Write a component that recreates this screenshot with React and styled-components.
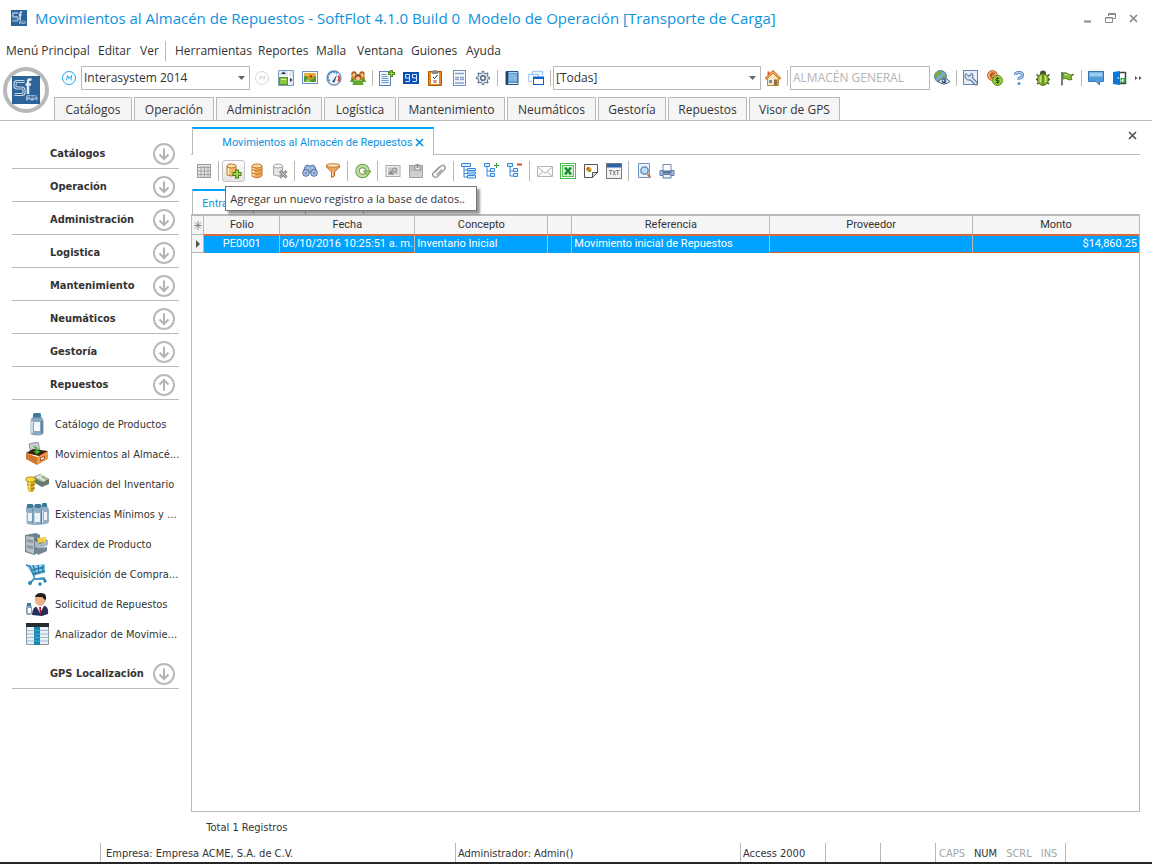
import React from 'react';
import styled, { createGlobalStyle, css } from 'styled-components';

const ui = '"Open Sans", "Noto Sans", sans-serif';
const tahoma = '"DejaVu Sans Condensed", "DejaVu Sans", sans-serif';
const grid = 'Roboto, "Liberation Sans", sans-serif';
const LINE = '#b9b9b9';
const BLUE = '#00a2ff';
const LINK = '#0d93de';

const Global = createGlobalStyle`
  *, *::before, *::after { box-sizing: border-box; }
  body { margin: 0; background: #fff; color: #333; font-family: ${ui}; font-size: 12px; }
  button, input, select { font: inherit; color: inherit; margin: 0; }
  svg { display: block; flex: none; }
`;

const Window = styled.div`
  min-height: 100vh;
  display: flex;
  flex-direction: column;
  background: #fff;
`;

const TitleBar = styled.header`
  display: flex;
  align-items: center;
  height: 36px;
  padding: 0 7px 0 11px;
`;

const Title = styled.h1`
  flex: 1;
  margin: 0 0 0 8px;
  font-size: 15px;
  line-height: 20px;
  font-weight: 400;
  color: ${LINK};
  white-space: pre;
  overflow: hidden;
`;

const PlainButton = styled.button`
  display: flex;
  align-items: center;
  justify-content: center;
  padding: 0;
  border: 0;
  background: none;
`;

const WindowButton = styled(PlainButton)`
  width: 23px;
  height: 20px;
`;

const MenuBar = styled.nav`
  display: flex;
  align-items: center;
  height: 30px;
  padding-left: 6px;
`;

const MenuItem = styled(PlainButton)`
  flex: 0 0 ${(p) => p.$w}px;
  justify-content: flex-start;
  line-height: 20px;
  white-space: nowrap;
  ${(p) => p.$split && css`
    padding-left: 9px;
    border-left: 1px solid ${LINE};
  `}
`;

const Ribbon = styled.div`
  display: flex;
  border-bottom: 1px solid ${LINE};
`;

const LogoCell = styled.div`
  flex: 0 0 54px;
  padding: 1px 0 0 3px;
`;

const RibbonRows = styled.div`
  flex: 1;
  min-width: 0;
`;

const MainToolbar = styled.div`
  display: flex;
  align-items: center;
  height: 24px;
  padding-left: 3px;
`;

const ToolButton = styled(PlainButton)`
  flex: 0 0 24px;
  height: 24px;
`;

const Divider = styled.span`
  flex: 0 0 1px;
  height: ${(p) => p.$h || 16}px;
  margin: 0 ${(p) => p.$m || 2}px;
  background: ${LINE};
`;

const Combo = styled.div`
  position: relative;
  flex: 0 0 ${(p) => p.$w}px;
  height: 24px;

  select {
    width: 100%;
    height: 100%;
    padding: 0 20px 2px 2px;
    border: 1px solid ${LINE};
    border-radius: 0;
    background: #fff;
    appearance: none;
  }

  svg {
    position: absolute;
    right: 5px;
    top: 10px;
    pointer-events: none;
  }
`;

const TextBox = styled.input`
  flex: 0 0 140px;
  width: 140px;
  height: 24px;
  padding: 0 2px 2px;
  border: 1px solid ${LINE};
  background: #fff;
  &:disabled { color: #b4b4b4; }
`;

const RibbonTabs = styled.div`
  display: flex;
  gap: 2px;
  margin-top: 7px;
`;

const RibbonTab = styled.button`
  flex: 0 0 ${(p) => p.$w}px;
  height: 23px;
  padding: 2px 0 0;
  border: 1px solid ${LINE};
  border-bottom: 0;
  background: #f5f5f5;
  line-height: 20px;
  white-space: nowrap;
`;

const Body = styled.div`
  flex: 1;
  display: flex;
`;

const Sidebar = styled.aside`
  flex: 0 0 191px;
  padding: 15px 12px 0;
  font-family: ${tahoma};
  font-size: 11px;
`;

const GroupHeader = styled(PlainButton)`
  width: 100%;
  height: 33px;
  justify-content: space-between;
  padding: 3px 4px 0 38px;
  border-bottom: 1px solid ${LINE};
  font-weight: 700;
  white-space: nowrap;
`;

const GroupItems = styled.ul`
  margin: 9px 0 7px;
  padding: 0 0 0 13px;
  list-style: none;
`;

const GroupItem = styled.a`
  display: flex;
  align-items: center;
  gap: 6px;
  height: 30px;
  color: inherit;
  text-decoration: none;
  white-space: nowrap;
`;

const Main = styled.main`
  flex: 1;
  min-width: 0;
  display: flex;
  flex-direction: column;
  padding: 6px 12px 0 0;
`;

const DocTabs = styled.div`
  display: flex;
  align-items: flex-start;
  justify-content: space-between;
  height: 28px;
  padding-left: 1px;
  border-bottom: 1px solid ${LINE};
`;

const DocTab = styled.div`
  display: flex;
  align-items: center;
  justify-content: space-between;
  width: 242px;
  height: 28px;
  padding: 0 9px 0 29px;
  border: 1px solid ${LINE};
  border-top: 2px solid ${BLUE};
  border-bottom: 0;
  background: #fff;
  color: ${LINK};
  font-family: ${grid};
  font-size: 11px;
  white-space: nowrap;
`;

const ClosePanel = styled(PlainButton)`
  width: 15px;
  height: 16px;
`;

const RecordToolbar = styled.div`
  display: flex;
  align-items: center;
  height: 32px;
  padding-left: 1px;
`;

const RecordButton = styled(PlainButton)`
  width: 23px;
  height: 22px;
  border-radius: 3px;
  ${(p) => p.$hot && css`
    border: 1px solid #c4c4c4;
    background: linear-gradient(#fff, #e4e4e4);
  `}
`;

const TipAnchor = styled.div`
  position: relative;
`;

const Tooltip = styled.div`
  position: absolute;
  z-index: 2;
  left: 3px;
  top: 26px;
  width: 252px;
  height: 25px;
  padding-left: 4px;
  border: 1px solid #767676;
  background: #fff;
  box-shadow: 3px 3px 2px rgba(0, 0, 0, 0.4);
  font-size: 11px;
  line-height: 23px;
  white-space: nowrap;
`;

const ViewTabs = styled.div`
  display: flex;
  align-items: flex-end;
  height: 27px;
  padding: 2px 0 0 1px;
`;

const ViewTab = styled.button`
  width: ${(p) => p.$w}px;
  height: 25px;
  padding: 2px 0 0 9px;
  border: 0;
  border-left: 1px solid ${LINE};
  border-top: 2px solid ${BLUE};
  background: #fff;
  color: ${LINK};
  font-family: ${grid};
  font-size: 11px;
  text-align: left;
  overflow: hidden;
`;

const ViewMark = styled.span`
  width: ${(p) => p.$w}px;
  height: 4px;
  border-left: 1px solid ${LINE};
`;

const GridPanel = styled.div`
  flex: 1;
  border: 1px solid ${LINE};
  border-top-width: 2px;
`;

const Table = styled.table`
  width: 100%;
  border-collapse: separate;
  border-spacing: 0;
  table-layout: fixed;
  font-family: ${grid};
  font-size: 11px;
  line-height: 14px;
`;

const HeadCell = styled.th`
  width: ${(p) => (p.$w ? `${p.$w}px` : 'auto')};
  height: 18px;
  padding: 0;
  border-right: 1px solid ${LINE};
  background: #f5f5f5;
  font-weight: 400;
  &:last-child { border-right: 0; }
`;

const Cell = styled.td`
  height: 19px;
  padding: 0 2px;
  border-top: 2px solid #d8693c;
  border-bottom: 1px dotted #e8641e;
  border-right: 1px solid ${LINE};
  background: ${BLUE};
  color: #fff;
  text-align: ${(p) => p.$align || 'left'};
  white-space: nowrap;
  overflow: hidden;
  &:last-child { border-right: 0; }
`;

const MarkerCell = styled.td`
  padding: 0 0 0 3px;
  border: solid ${LINE};
  border-width: 1px 1px 1px 0;
  background: #f5f5f5;
`;

const Total = styled.p`
  margin: 0;
  padding-left: 15px;
  font-family: ${tahoma};
  font-size: 11px;
  line-height: 31px;
`;

const StatusBar = styled.footer`
  display: flex;
  height: 21px;
  padding-left: 100px;
  border-bottom: 2px solid #262626;
  font-family: ${tahoma};
  font-size: 11px;
  line-height: 21px;
`;

const StatusCell = styled.div`
  flex: ${(p) => (p.$grow ? '1 0' : '0 0')} ${(p) => p.$w}px;
  padding-left: ${(p) => p.$pad || 2}px;
  border-left: 1px solid ${LINE};
  white-space: nowrap;
`;

const KeyStates = styled(StatusCell)`
  display: flex;
  gap: 9px;
  color: #a5a5a5;
  strong { font-weight: 400; color: #333; }
`;

const ART = {
  logo: (
    <>
      <rect width="28" height="28" fill="#2c6499" />
      <path d="M12.500 5.500H5Q3 5.500 3 8v1.500Q3 12 5 12h5q2 0 2 2v2.500q0 2-2 2H2.500" fill="none" stroke="#c9d9e8" strokeWidth="3.200" />
      <path d="M12.500 5.500H5Q3 5.500 3 8v1.500Q3 12 5 12h5q2 0 2 2v2.500q0 2-2 2H2.500" fill="none" stroke="#2c6499" strokeWidth="1" />
      <path d="M19.500 3.500h-1.500q-2 0-2 2V18M13.500 8.500h5.500" fill="none" stroke="#e2ebf3" strokeWidth="2.500" />
      <path d="M14 21q0-2 2-2h7q2 0 2.500 2.500v3H14z" fill="#9dbbd6" />
      <path d="M15.500 21h9M19 19.500v3M22 19.500v3" stroke="#2c6499" strokeWidth="1" />
      <circle cx="17" cy="24.500" r="1.300" fill="#2c6499" /><circle cx="23" cy="24.500" r="1.300" fill="#2c6499" />
    </>
  ),
  badge: (
    <>
      <circle cx="8" cy="8" r="6.500" fill="#fff" stroke="currentColor" />
      <path d="M5.500 10.500l1-5L8 8.500l2.700-3-.9 5" fill="none" stroke="currentColor" />
    </>
  ),
  layout: (
    <>
      <path d="M.5.500h15v15H.5z" fill="#dce9f7" stroke="#7b9cc6" />
      <path d="M1 6.500h14M10.500 1v14" stroke="#fff" /><path d="M3 4h5L5.500 1.500zM12 8v4l2.500-2z" fill="#333" />
      <rect x="1.500" y="7.500" width="8" height="7" fill="#8cc63e" stroke="#5d9420" /><path d="M3 9.500h5" stroke="#dcefb6" />
    </>
  ),
  picture: (
    <>
      <rect x=".5" y="1.500" width="15" height="12" fill="#fff" stroke="#6d92c6" />
      <rect x="2" y="3" width="12" height="9" fill="#4f9637" /><path d="M2 3h12v3L9 7 2 6z" fill="#e3b14c" />
      <circle cx="9" cy="6.500" r="3" fill="#f49a28" /><circle cx="9" cy="6.500" r="1.200" fill="#8b4510" /><path d="M3 12l3-4 3 4" fill="#9cc84b" />
    </>
  ),
  gauge: (
    <>
      <circle cx="8" cy="8" r="7" fill="#edf4fc" stroke="#7792b9" strokeWidth="1.300" />
      <path d="M3.500 11A5.300 5.300 0 0 1 11 3.500" fill="none" stroke="#3a7dcc" strokeWidth="1.800" strokeDasharray="2 1" />
      <path d="M12.300 5.500a5 5 0 0 1 0 6" fill="none" stroke="#e23c24" strokeWidth="1.800" /><path d="M6 12l5-7.500-2.500 8z" fill="#35557e" />
    </>
  ),
  people: (
    <>
      <path d="M1 7q3-3 6 0v3H1zM9 7q3-3 6 0v3H9z" fill="#d8892f" />
      <circle cx="4" cy="4" r="2.700" fill="#a86226" /><circle cx="12" cy="4" r="2.700" fill="#a86226" />
      <circle cx="4" cy="5" r="1.700" fill="#f6c78e" /><circle cx="12" cy="5" r="1.700" fill="#f6c78e" />
      <path d="M2.500 15q0-5 5.500-5t5.500 5z" fill="#62a92e" /><path d="M0 12q1-4 4-4l1 4zM16 12q-1-4-4-4l-1 4z" fill="#5b9c2e" />
      <circle cx="8" cy="7" r="3" fill="#99501d" /><circle cx="8" cy="8.500" r="2" fill="#f8cf9c" />
    </>
  ),
  formAdd: (
    <>
      <rect x=".5" y="1.500" width="11" height="14" fill="#eff5fc" stroke="#5b82b6" />
      <path d="M2.500 4.500h5M2.500 6.500h6M2.500 8.500h7M2.500 10.500h7M2.500 12.500h7" stroke="#6d9bd1" />
      <path d="M12.500 0v7M9 3.500h7" stroke="#4f8c15" strokeWidth="3" /><path d="M12.500 1v5M10 3.500h5" stroke="#9bd053" />
    </>
  ),
  counter: (
    <>
      <rect y="2" width="16" height="12" fill="#0b50b5" />
      <path d="M6.500 11V4.500h-4V8h4M2.500 11.500h4M13.500 11V4.500h-4V8h4M9.500 11.500h4" fill="none" stroke="#d9efff" />
    </>
  ),
  clipboard: (
    <>
      <path d="M1.500 1.500h13v14h-13z" fill="#e18b2a" stroke="#a8590c" /><path d="M4 3h8v11H4z" fill="#fff" />
      <path d="M5 1.500q0-1.500 3-1.500t3 1.500V4H5z" fill="#8e8a85" />
      <path d="M6 7l1.500 1.500L10.500 5" fill="none" stroke="#222" /><path d="M6.500 10l3 3M9.500 10l-3 3" stroke="#c52b1c" />
    </>
  ),
  form: (
    <>
      <rect x="2.500" y=".5" width="12" height="15" fill="#f6f9fd" stroke="#738fba" />
      <path d="M4 3.500h9M4 7.500h4M9 7.500h4M4 9.500h4M9 9.500h4M4 13h9" stroke="#88a4cd" strokeWidth="1.500" />
    </>
  ),
  gear: (
    <>
      <path d="M8 1v14M1 8h14M3 3l10 10M13 3L3 13" stroke="#64758c" strokeWidth="2.400" />
      <circle cx="8" cy="8" r="5.200" fill="#dce4ee" stroke="#64758c" /><path d="M8 2v12M2 8h12M4 4l8 8M12 4l-8 8" stroke="#dce4ee" />
      <circle cx="8" cy="8" r="2.300" fill="#fff" stroke="#53657c" strokeWidth="1.400" />
    </>
  ),
  book: (
    <>
      <path d="M2 1.500h12v13H2z" fill="#5f9bd0" stroke="#2b527e" /><path d="M2 2h2v12H2z" fill="#213e60" />
      <path d="M5 2.500h8.500" stroke="#b4d7f1" /><path d="M5 4h8v7H5z" fill="#82b7e2" /><path d="M4.500 13.500h9" stroke="#dfeaf5" />
    </>
  ),
  windows: (
    <>
      <path d="M4.500 5.500v-4h10v4M.5 11V4.500h10v2M4 11.500H.5" fill="none" stroke="#a9cdf5" strokeWidth="1.500" />
      <rect x="5.500" y="7" width="10" height="7.500" fill="#fff" stroke="#0a66cd" /><path d="M5 8h11" stroke="#0a66cd" strokeWidth="2" />
    </>
  ),
  home: (
    <>
      <path d="M2.500 8.500L8 3l5.500 5.500v7h-11z" fill="#f9e6bd" stroke="#b28a4d" />
      <path d="M.5 9L8 1.500 15.500 9" fill="none" stroke="#d9741f" strokeWidth="2.400" /><path d="M1.500 8L8 1.800 14.500 8" fill="none" stroke="#ffc27a" strokeWidth="1" />
      <path d="M2.500 5V1.500h2V4" fill="#d34b35" /><rect x="9" y="9.500" width="3.500" height="6" fill="#9d6837" /><rect x="4" y="10" width="3" height="3" fill="#5d8fc2" />
    </>
  ),
  globe: (
    <>
      <circle cx="6.500" cy="6.500" r="6" fill="#75abd8" stroke="#54799b" />
      <path d="M2 2.500q3-2 6-1l-1 3-3 1-1 3-2-1zM8 6l4-1v4l-3 1zM4 9l2 1-1 2z" fill="#77aa39" />
      <path d="M4 11.500q6-6 12 0-6 5-12 0z" fill="#edf2fa" stroke="#4e617f" /><circle cx="10" cy="11.300" r="2.300" fill="#40588a" /><circle cx="9.500" cy="10.800" r=".8" fill="#fff" />
    </>
  ),
  wrench: (
    <>
      <rect x=".5" y=".5" width="14" height="14" fill="#e8eff9" stroke="#6685b5" />
      <path d="M6.500 7l6.500 6.500" stroke="#4d6f99" strokeWidth="4" strokeLinecap="round" />
      <path d="M3 3.500A4 4 0 1 0 8.500 3L7 6 5 5.800z" fill="#d5dfec" stroke="#4d6f99" /><path d="M7 7.500l6 6" stroke="#dbe4ef" strokeWidth="2" strokeLinecap="round" />
    </>
  ),
  coins: (
    <>
      <circle cx="5.500" cy="5.500" r="5" fill="#f3a260" stroke="#c86a29" /><path d="M8 3.500q-4-1.500-4 2t4 2M3 5h4" fill="none" stroke="#a34710" strokeWidth="1.200" />
      <circle cx="10.500" cy="10.500" r="5" fill="#99cc3f" stroke="#5d8e14" /><path d="M12.500 8.500h-3.500v2h3v2H8.500M10.500 7v7" fill="none" stroke="#365f09" />
    </>
  ),
  help: (
    <>
      <path d="M4.500 5Q4.500 2.500 8 2.500t3.500 2.500Q11.500 7 8 8.500V10" fill="none" stroke="#4377b5" strokeWidth="3" />
      <path d="M4.500 5Q4.500 2.500 8 2.500t3.500 2.500Q11.500 7 8 8.500V10" fill="none" stroke="#a5cef4" strokeWidth="1.400" /><circle cx="8" cy="13.500" r="1.600" fill="#5b93d1" />
    </>
  ),
  bug: (
    <>
      <path d="M1.500 4.500L4 6.500M14.500 4.500L12 6.500M1 9.500h3M15 9.500h-3M2 14l2.500-2M14 14l-2.500-2" stroke="#3b4622" strokeWidth="1.400" />
      <circle cx="8" cy="3.500" r="3" fill="#45503a" /><ellipse cx="8" cy="9.500" rx="5.500" ry="5.800" fill="#8dbb35" stroke="#47690c" />
      <path d="M8 4.500v10.500" stroke="#47690c" /><path d="M5.500 6v6M10.500 6v6" stroke="#cbe681" strokeWidth="1.500" />
    </>
  ),
  flag: (
    <>
      <path d="M3 2v13.500" stroke="#73806e" strokeWidth="2" />
      <path d="M4 3q3-1 5 1t6 0l-3 3 1 2.500q-3 1-5-.5T4 9z" fill="#86b93b" stroke="#548417" /><path d="M5 5q2-1 4 .5" stroke="#cfe8a3" fill="none" />
    </>
  ),
  chat: (
    <>
      <path d="M.5 1.500h15v10h-4V15l-3.500-3.500H.5z" fill="#559cdb" stroke="#3876b4" /><path d="M1.500 2.500h13v4h-13z" fill="#9bcdf3" />
    </>
  ),
  exit: (
    <>
      <path d="M7 2.500h6.500v11H7z" fill="#fff" stroke="#444" strokeWidth="1.500" /><path d="M1 2l7-1v14l-7-1z" fill="#0878d9" /><circle cx="6.300" cy="8" r=".8" fill="#fff" />
      <path d="M8.500 8h5v5h-5z" fill="#29a638" /><path d="M9 10.500l2.500-2v4z" fill="#fff" />
    </>
  ),
  table: (
    <>
      <rect x="1.500" y="1.500" width="13" height="13" fill="#e4e4e4" stroke="#9d9d9d" />
      <path d="M2 4.500h12M2 8h12M2 11.500h12M5 3v11M8.500 3v11M12 3v11" stroke="#a2a2a2" />
    </>
  ),
  dbAdd: (
    <>
      <path d="M1 3v9q4 2 9 0V3z" fill="#f1b663" stroke="#b87526" /><path d="M2.500 5v7" stroke="#fff0cb" strokeWidth="1.500" />
      <ellipse cx="5.500" cy="3" rx="4.500" ry="2" fill="#fbe1ac" stroke="#b87526" /><path d="M11 6.500v9M6.500 11h9" stroke="#467d1a" strokeWidth="4" /><path d="M11 7.500v7M7.500 11h7" stroke="#9cd24d" strokeWidth="2" />
    </>
  ),
  db: (
    <>
      <path d="M3 3v10q5 3.500 10 0V3z" fill="#f0aa50" stroke="#bd7a30" /><path d="M4.500 5v8" stroke="#ffe4b1" strokeWidth="2" />
      <ellipse cx="8" cy="3" rx="5" ry="2" fill="#fbd99b" stroke="#bd7a30" /><path d="M3 6.500q5 3 10 0M3 10q5 3 10 0" fill="none" stroke="#bd7a30" />
    </>
  ),
  dbDel: (
    <>
      <path d="M1.500 3v9q4 2 9 0V3z" fill="#e5e5e5" stroke="#a5a5a5" /><ellipse cx="6" cy="3" rx="4.500" ry="2" fill="#f5f5f5" stroke="#a5a5a5" />
      <path d="M8 8l6.500 6.500M14.500 8L8 14.500" stroke="#858585" strokeWidth="3" /><path d="M8.500 8.500l5.500 5.500M14 8.500L8.500 14" stroke="#cfcfcf" />
    </>
  ),
  find: (
    <>
      <path d="M3.500 3q2-2 3.500 0h2q1.500-2 3.500 0l2.500 6H1z" fill="#9bb8df" stroke="#4a6798" />
      <circle cx="4" cy="10" r="3.300" fill="#bed4f0" stroke="#4a6798" /><circle cx="12" cy="10" r="3.300" fill="#bed4f0" stroke="#4a6798" />
      <circle cx="4" cy="10" r="1.500" fill="#7290bd" /><circle cx="12" cy="10" r="1.500" fill="#7290bd" />
    </>
  ),
  filter: (
    <>
      <path d="M1.500 2v2l5 5v5.500l3-1.500V9l5-5V2z" fill="#eda65c" stroke="#b76a24" /><ellipse cx="8" cy="2.500" rx="6.500" ry="1.800" fill="#fbe0af" stroke="#c27a32" />
      <path d="M7.500 9v4" stroke="#fbdfb6" />
    </>
  ),
  refresh: (
    <>
      <circle cx="7.500" cy="8" r="5" fill="none" stroke="#6a9a4d" strokeWidth="4.500" /><circle cx="7.500" cy="8" r="5" fill="none" stroke="#c2e1a0" strokeWidth="2.600" />
      <path d="M8.500 8h7.500l-3.500 4.500z" fill="#a8d275" stroke="#6a9a4d" />
    </>
  ),
  photo: (
    <>
      <rect x="1" y="2.500" width="14" height="11" fill="#eee" stroke="#aaa" /><rect x="3" y="4.500" width="10" height="7" fill="#c5c5c5" />
      <circle cx="9.500" cy="7" r="2.500" fill="#9b9b9b" /><path d="M3 11.500l3-4 3 4z" fill="#858585" /><circle cx="9.500" cy="7" r="1" fill="#ddd" />
    </>
  ),
  note: (
    <>
      <rect x="1.500" y="2.500" width="13" height="12" fill="#bcbcbc" stroke="#a4a4a4" /><path d="M2 8h12v6H2z" fill="#cecece" />
      <path d="M7 2h5v5H7z" fill="#f2f2f2" stroke="#909090" /><path d="M9.500 1v4" stroke="#888" strokeWidth="2" />
    </>
  ),
  clip: <path d="M4 9l6-6q2-1.500 3.500 0t0 3.500l-7 7q-2 1.500-4 0t0-4L9 3.500M5.500 12L11 6.500" fill="none" stroke="#9b9b9b" strokeWidth="1.400" />,
  tree: (
    <>
      <path d="M3 4v10h3M3 7h3M3 10.500h3" fill="none" stroke="#3586dc" />
      <path d="M.5.500h9v3h-9zM6.500 5.500h8v2h-8zM6.500 9h8v2h-8zM6.500 12.500h8v2.500h-8z" fill="#d9eeff" stroke="#3586dc" />
    </>
  ),
  treeAdd: (
    <>
      <path d="M3 4v9h3M3 8h3" fill="none" stroke="#3586dc" /><path d="M.5.500h5v3h-5zM6.500 5.500h4v3h-4zM6.500 10.500h4v3h-4z" fill="#d9eeff" stroke="#3586dc" />
      <path d="M12.500 0v5M10 2.500h5" stroke="#3a9d3e" />
    </>
  ),
  treeDel: (
    <>
      <path d="M3 4v9h3M3 8h3" fill="none" stroke="#3586dc" /><path d="M.5.500h5v3h-5zM6.500 5.500h4v3h-4zM6.500 10.500h4v3h-4z" fill="#d9eeff" stroke="#3586dc" />
      <path d="M10 1.500h5" stroke="#e0462c" strokeWidth="2" />
    </>
  ),
  mail: <path d="M.5 3.500h15v10H.5zM.5 4L8 10l7.500-6M1 13l5-4.500M15 13l-5-4.500" fill="#fafafa" stroke="#b5b5b5" />,
  excel: (
    <>
      <rect x=".5" y=".5" width="15" height="15" fill="#fff" stroke="#4abc54" /><rect x="2.500" y="2.500" width="11" height="11" fill="#d3efcf" stroke="#5dbe5c" />
      <path d="M5 4.500l6 7M11 4.500l-6 7" stroke="#198c31" strokeWidth="2.500" />
    </>
  ),
  report: (
    <>
      <path d="M1.500 1.500h13v8l-5 5h-8z" fill="#fff" stroke="#555" /><path d="M14.500 9.500h-5v5z" fill="#ddd" stroke="#555" />
      <circle cx="6" cy="6.500" r="2.600" fill="#f4b42d" /><path d="M6 6.500V4a2.600 2.600 0 0 0-2.500 3z" fill="#dc3f2b" /><path d="M6 6.500l2.500.5a2.600 2.600 0 0 1-3 2z" fill="#49a643" />
    </>
  ),
  txt: (
    <>
      <rect x=".5" y=".5" width="15" height="15" fill="#f2f2f2" stroke="#777" /><path d="M1 1h14v3.500H1z" fill="#2b62a8" />
      <path d="M3 7.500h3.500M4.700 7.500V12M7 7.500l2.500 4.500M9.500 7.500L7 12M10 7.500h3.500M11.700 7.500V12" stroke="#777" strokeWidth=".9" />
    </>
  ),
  preview: (
    <>
      <path d="M2.500.5h11v14h-11z" fill="#edf4fc" stroke="#6991c2" /><circle cx="8.500" cy="7.500" r="3.700" fill="#bbdcf5" stroke="#5584b4" strokeWidth="1.300" /><path d="M11.500 11l3 3.500" stroke="#be8146" strokeWidth="2.200" />
    </>
  ),
  print: (
    <>
      <path d="M1 7.500h14v5H1z" fill="#a9bedc" stroke="#617da7" /><path d="M4 1.500h8v7H4z" fill="#fff" stroke="#7188ab" />
      <path d="M3.500 7.500h9v3h-9z" fill="#57749f" /><path d="M4 11.500h8v3.500H4z" fill="#e9f1fb" stroke="#617da7" />
    </>
  ),
  arrow: (
    <>
      <circle cx="11" cy="11" r="10" fill="#fff" stroke="#b9b9b9" strokeWidth="2" /><path d="M11 5.500V16M6.500 11.500l4.500 4.500 4.500-4.500" fill="none" stroke="#b3b3b3" strokeWidth="2" />
    </>
  ),
  arrowUp: (
    <>
      <circle cx="11" cy="11" r="10" fill="#fff" stroke="#b9b9b9" strokeWidth="2" /><path d="M11 16.500V6M6.500 10.500L11 6l4.500 4.500" fill="none" stroke="#b3b3b3" strokeWidth="2" />
    </>
  ),
  bottle: (
    <>
      <path d="M8.500 4h7q3 2 3 5v12q0 2.500-6.500 2.500T5.500 21V9q0-3 3-5z" fill="#86a7be" /><path d="M7 9v12" stroke="#c8dbe6" strokeWidth="2" />
      <rect x="8" y="1" width="8" height="4.500" rx="1.500" fill="#3c7898" /><path d="M9 10h6v9H9z" fill="#f6f6f8" /><path d="M17 9v12" stroke="#527996" strokeWidth="1.500" />
    </>
  ),
  box: (
    <>
      <path d="M4 2l9-2 2 9-9 3z" fill="#c9ced0" stroke="#8d9699" /><path d="M1 11l7-4 15 2-5 6z" fill="#45200c" />
      <path d="M8 4q5 0 5 5h2.500L12 12.500 8.500 9H11q0-3-3-5z" fill="#27be2f" />
      <path d="M1 11l11 4v8L1 17z" fill="#d2762d" /><path d="M12 15l11-6v8l-11 6z" fill="#ed9a48" /><path d="M15 16l5-2.500v3.500l-5 2.500z" fill="#9b5c2e" /><path d="M16 16.500l3-1.500v1.500l-3 1.500z" fill="#fff" />
    </>
  ),
  money: (
    <>
      <path d="M8 5l7-3 9 5v5l-7 3-9-5z" fill="#677a68" /><path d="M8 5l7-3 9 5-7 3z" fill="#a9b99f" /><path d="M12 4l8 5M17 3l-5 3" stroke="#e6e9dc" strokeWidth="2" />
      <path d="M2 8l1 11q3 2 6 0l1-11z" fill="#d3a71f" /><path d="M2 12q4 3 8 0M3 16q3 2 7 0" stroke="#9a720e" fill="none" /><ellipse cx="5.500" cy="7.500" rx="4.800" ry="2.500" fill="#f7d949" stroke="#b48c15" /><path d="M4.500 10v9" stroke="#f6d957" strokeWidth="2" />
    </>
  ),
  bottles: (
    <>
      <path d="M2 4q8-3 20 0 2 2 2 5v11q-1 2-4 2-4 1-8 1-8 0-11-2V8q0-3 1-4z" fill="#8daec4" />
      <rect x="2" y="2" width="6" height="4" rx="1" fill="#3c7898" /><rect x="10" y="2" width="6" height="4" rx="1" fill="#3c7898" /><rect x="17" y="1" width="5" height="4" rx="1" fill="#3c7898" />
      <path d="M3 11h4v8H3zM10 11h5v9h-5zM19 10h3v8h-3z" fill="#eff2f5" /><path d="M1.500 10v11M9 9v13M17.500 8v13" stroke="#d2e1eb" strokeWidth="1.300" /><path d="M8 7v15M16.500 7v15" stroke="#54809e" />
    </>
  ),
  cabinet: (
    <>
      <path d="M0 3l11-2 4 2v17l-6 3-9-3z" fill="#6e8390" /><path d="M1 4l8 1v17l-8-3z" fill="#b4c2cb" /><path d="M2 7l6 1v3l-6-1zM2 13l6 1v3l-6-1z" fill="#8b99a4" />
      <path d="M10 7l9-1 4 3-8 3z" fill="#4e5c66" /><path d="M12 6l9-1v5l-8 1z" fill="#f4cf43" /><path d="M10 9l5 3v5l-5-2zM15 12l8-3v4l-8 4z" fill="#a8b8c1" /><path d="M10 17l12-2v4l-9 4z" fill="#748793" />
    </>
  ),
  cart: (
    <>
      <path d="M2 4l18-2v9L8 14z" fill="#8ccae6" /><path d="M1 3l4 1 5 13h10M7 8l12-3M8 12l12-3M8 3l3 10M13 3l1 9M18 3v7" fill="none" stroke="#287eaa" strokeWidth="1.300" />
      <path d="M10 16l-5 5M12 17l7-1 1 3" fill="none" stroke="#4297bd" strokeWidth="2" /><circle cx="5" cy="21" r="2" fill="#2d85b0" /><circle cx="15" cy="22" r="1.700" fill="#2d85b0" /><circle cx="20" cy="19" r="1.700" fill="#2d85b0" />
    </>
  ),
  person: (
    <>
      <path d="M7 23q0-8 6-9l7 0q4 2 3 8l-6 2z" fill="#272d59" /><path d="M11 14l4 7 4-7z" fill="#f7f7fb" /><path d="M14 15h2v6l-1 1z" fill="#b32133" />
      <path d="M10 5q1-4 6-4 6 0 5 6l-2 4h-8z" fill="#241d22" /><path d="M10 5l7 0 3 3q-1 6-5 6-4-1-5-5z" fill="#edb186" />
      <rect x="1" y="13" width="6" height="10" rx="2" fill="#85a6bc" /><rect x="2" y="11" width="4" height="3" fill="#3e7691" /><rect x="3" y="16" width="3" height="5" fill="#fff" />
    </>
  ),
  analyzer: (
    <>
      <path d="M1.500 1.500h22v21h-22z" fill="#e8f1f7" stroke="#8d989f" /><path d="M1 1h23v4H1z" fill="#242b32" />
      <path d="M2 8.500h21M2 12h21M2 15.500h21M2 19h21" stroke="#9dbbd0" /><path d="M9 5h6v18H9z" fill="#1786b5" /><path d="M9 8.500h6M9 12h6M9 15.500h6M9 19h6" stroke="#4ca7ce" />
    </>
  ),
};

const Icon = ({ name, size = 16, box = 16, color }) => (
  <svg width={size} height={size} viewBox={`0 0 ${box} ${box}`} color={color} aria-hidden="true">{ART[name]}</svg>
);

const Caret = () => <svg width="7" height="4" viewBox="0 0 7 4"><path d="M0 0h7L3.500 4z" fill="#666" /></svg>;
const Cross = ({ color, size = 9 }) => (
  <svg width={size} height={size} viewBox="0 0 9 9"><path d="M1 1l7 7M8 1L1 8" stroke={color} strokeWidth="1.700" /></svg>
);

const Logo = () => (
  <svg width="46" height="46" viewBox="0 0 46 46" role="img" aria-label="SoftFlot">
    <circle cx="23" cy="23" r="21" fill="#fff" stroke="#b9b9b9" strokeWidth="4" />
    <g transform="translate(9 9)">{ART.logo}</g>
  </svg>
);

const Tools = ({ items }) => items.map((n, i) => (n === '|' ? <Divider key={i} /> : (
  <ToolButton key={i} aria-label={n}><Icon name={n} /></ToolButton>
)));

const Records = ({ items }) => items.map((n, i) => (n === '|' ? <Divider key={i} $h={20} $m={3} /> : (
  <RecordButton key={i} aria-label={n}><Icon name={n} /></RecordButton>
)));

const menus = [['Menú Principal', 92], ['Editar', 42], ['Ver', 25], ['Herramientas', 93, true], ['Reportes', 58], ['Malla', 41], ['Ventana', 54], ['Guiones', 55], ['Ayuda', 40]];
const tabs = [['Catálogos', 78], ['Operación', 80], ['Administración', 106], ['Logística', 72], ['Mantenimiento', 107], ['Neumáticos', 89], ['Gestoría', 68], ['Repuestos', 79], ['Visor de GPS', 91]];
const groups = ['Catálogos', 'Operación', 'Administración', 'Logistica', 'Mantenimiento', 'Neumáticos', 'Gestoría'];
const items = [['bottle', 'Catálogo de Productos'], ['box', 'Movimientos al Almacé...'], ['money', 'Valuación del Inventario'], ['bottles', 'Existencias Mínimos y ...'], ['cabinet', 'Kardex de Producto'], ['cart', 'Requisición de Compra...'], ['person', 'Solicitud de Repuestos'], ['analyzer', 'Analizador de Movimie...']];

export default function App() {
  return (
    <Window>
      <Global />
      <TitleBar>
        <Icon name="logo" size={16} box={28} />
        <Title>{'Movimientos al Almacén de Repuestos - SoftFlot 4.1.0 Build 0  Modelo de Operación [Transporte de Carga]'}</Title>
        <WindowButton aria-label="Minimizar"><svg width="7" height="9" viewBox="0 0 7 9"><path d="M0 7.500h7" stroke="#8a8a8a" strokeWidth="2" /></svg></WindowButton>
        <WindowButton aria-label="Restaurar"><svg width="11" height="10" viewBox="0 0 11 10"><path d="M3.500 3V.5h7v5H8M3 1.500h8M.5 4.500h7v5h-7zM0 5h8" fill="none" stroke="#8a8a8a" /></svg></WindowButton>
        <WindowButton aria-label="Cerrar"><Cross color="#8a8a8a" /></WindowButton>
      </TitleBar>

      <MenuBar>
        {menus.map(([label, w, split]) => <MenuItem key={label} $w={w} $split={split}>{label}</MenuItem>)}
      </MenuBar>

      <Ribbon>
        <LogoCell><Logo /></LogoCell>
        <RibbonRows>
          <MainToolbar>
            <ToolButton aria-label="Modelo"><Icon name="badge" color="#1ba4ee" /></ToolButton>
            <Combo $w={169}>
              <select aria-label="Modelo de operación" defaultValue="a"><option value="a">Interasystem 2014</option></select>
              <Caret />
            </Combo>
            <ToolButton aria-label="Modelo inactivo"><Icon name="badge" color="#d6d6d6" /></ToolButton>
            <Tools items={['layout', 'picture', 'gauge', 'people', '|', 'formAdd', 'counter', 'clipboard', 'form', 'gear', '|', 'book', 'windows', '|']} />
            <Combo $w={208}>
              <select aria-label="Filtro" defaultValue="t"><option value="t">[Todas]</option></select>
              <Caret />
            </Combo>
            <Tools items={['home', '|']} />
            <TextBox aria-label="Almacén" disabled defaultValue="ALMACÉN GENERAL" />
            <Tools items={['globe', '|', 'wrench', 'coins', 'help', 'bug', 'flag', '|', 'chat', 'exit']} />
            <PlainButton aria-label="Más">
              <svg width="12" height="6" viewBox="0 0 12 6"><path d="M3 1v4l2.500-2zM7 1v4l2.500-2z" fill="#555" /></svg>
            </PlainButton>
          </MainToolbar>
          <RibbonTabs>
            {tabs.map(([label, w]) => <RibbonTab key={label} $w={w}>{label}</RibbonTab>)}
          </RibbonTabs>
        </RibbonRows>
      </Ribbon>

      <Body>
        <Sidebar>
          {groups.map((g) => <GroupHeader key={g}>{g}<Icon name="arrow" size={22} box={22} /></GroupHeader>)}
          <GroupHeader>Repuestos<Icon name="arrowUp" size={22} box={22} /></GroupHeader>
          <GroupItems>
            {items.map(([icon, label]) => (
              <li key={label}><GroupItem href="#"><Icon name={icon} size={24} box={24} />{label}</GroupItem></li>
            ))}
          </GroupItems>
          <GroupHeader>GPS Localización<Icon name="arrow" size={22} box={22} /></GroupHeader>
        </Sidebar>

        <Main>
          <DocTabs>
            <DocTab>
              Movimientos al Almacén de Repuestos
              <PlainButton aria-label="Cerrar pestaña"><Cross color={LINK} /></PlainButton>
            </DocTab>
            <ClosePanel aria-label="Cerrar panel"><Cross color="#555" /></ClosePanel>
          </DocTabs>

          <RecordToolbar>
            <Records items={['table', '|']} />
            <TipAnchor>
              <RecordButton $hot aria-label="Agregar"><Icon name="dbAdd" /></RecordButton>
              <Tooltip role="tooltip">Agregar un nuevo registro a la base de datos..</Tooltip>
            </TipAnchor>
            <Records items={['db', 'dbDel', '|', 'find', 'filter', '|', 'refresh', '|', 'photo', 'note', 'clip', '|', 'tree', 'treeAdd', 'treeDel', '|', 'mail', 'excel', 'report', 'txt', '|', 'preview', 'print']} />
          </RecordToolbar>

          <ViewTabs>
            <ViewTab $w={61}>Entradas</ViewTab>
            <ViewMark $w={52} />
            <ViewMark $w={58} />
            <ViewMark $w={1} />
          </ViewTabs>

          <GridPanel>
            <Table>
              <thead>
                <tr>
                  <HeadCell $w={12}>
                    <svg width="11" height="9" viewBox="-2 0 11 9"><path d="M4 0v9M0 4.500h8M1 1.500l6 6M7 1.500l-6 6" stroke="#777" strokeWidth=".8" /></svg>
                  </HeadCell>
                  <HeadCell $w={76}>Folio</HeadCell>
                  <HeadCell $w={135}>Fecha</HeadCell>
                  <HeadCell $w={133}>Concepto</HeadCell>
                  <HeadCell $w={24} aria-label="Estado" />
                  <HeadCell $w={198}>Referencia</HeadCell>
                  <HeadCell>Proveedor</HeadCell>
                  <HeadCell $w={166}>Monto</HeadCell>
                </tr>
              </thead>
              <tbody>
                <tr>
                  <MarkerCell><svg width="5" height="8" viewBox="0 0 5 8"><path d="M1 0v8l4-4z" fill="#555" /></svg></MarkerCell>
                  <Cell $align="center">PE0001</Cell>
                  <Cell>06/10/2016 10:25:51 a. m.</Cell>
                  <Cell>Inventario Inicial</Cell>
                  <Cell />
                  <Cell>Movimiento inicial de Repuestos</Cell>
                  <Cell />
                  <Cell $align="right">$14,860.25</Cell>
                </tr>
              </tbody>
            </Table>
          </GridPanel>
          <Total>Total 1 Registros</Total>
        </Main>
      </Body>

      <StatusBar>
        <StatusCell $w={355} $pad={5}>Empresa: Empresa ACME, S.A. de C.V.</StatusCell>
        <StatusCell $w={285}>Administrador: Admin()</StatusCell>
        <StatusCell $w={85}>Access 2000</StatusCell>
        <StatusCell $w={55} />
        <StatusCell $w={55} />
        <KeyStates $w={130} $pad={3}><span>CAPS</span><strong>NUM</strong><span>SCRL</span><span>INS</span></KeyStates>
        <StatusCell $w={0} $grow />
      </StatusBar>
    </Window>
  );
}
